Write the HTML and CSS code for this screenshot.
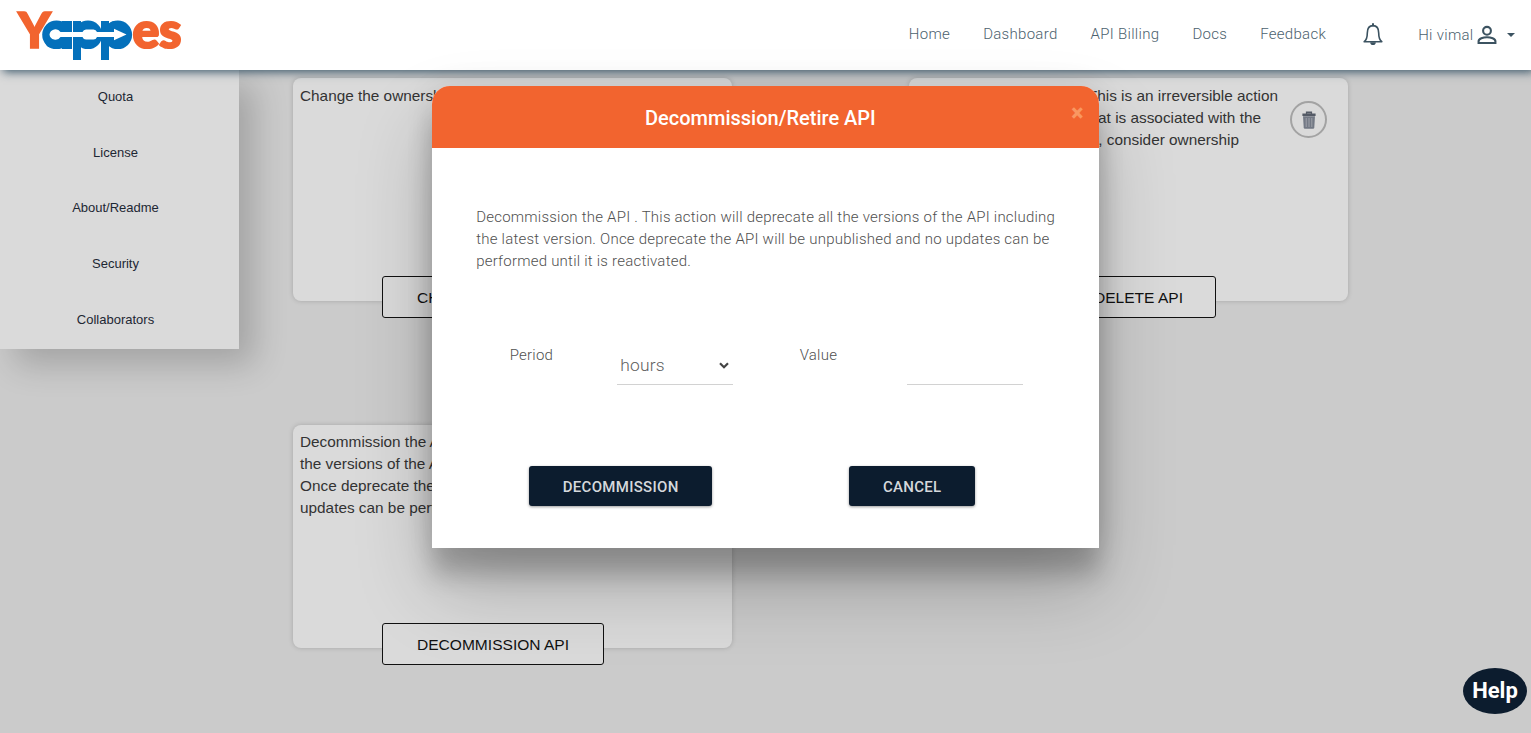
FILE: index.html
```html
<!DOCTYPE html>
<html lang="en">
<head>
<meta charset="utf-8">
<title>Yappes</title>
<link rel="stylesheet" href="styles.css">
</head>
<body>
<header class="topbar">
  <svg class="logo" width="190" height="70" viewBox="0 0 190 70" aria-label="Yappes">
    <text class="logo-orange" x="18" y="47.500" font-size="50" textLength="33" lengthAdjust="spacingAndGlyphs">Y</text>
    <text class="logo-blue" x="44 71 99" y="48" font-size="51">app</text>
    <g class="logo-blue-fill"><circle cx="56.500" cy="34.800" r="14.300"/><path d="M62 21h10v28H62zM73 21h8v39h-8zM101 21h8v39h-8z"/><circle cx="88" cy="34.800" r="14.300"/><circle cx="117.800" cy="34.800" r="14.300"/></g>
    <path d="M72.500 20v29" stroke="#fff" stroke-width=".8"/>
    <path class="logo-arrow" d="M49.500 34.500a6 6 0 0 1 11-2.500H82.500q1-2.600 3.500-2.600h7.500q2.500 0 3.500 2.600h17v-3.300l12.500 5.800-12.500 5.800v-3.300H97q-1 2.600-3.500 2.600H86q-2.500 0-3.500-2.600H60.500A6 6 0 0 1 49.500 34.500z"/>
    <text class="logo-orange bold" x="132.500" y="48" font-size="50" textLength="49" lengthAdjust="spacingAndGlyphs">es</text>
  </svg>
  <nav class="nav">
    <a>Home</a><a>Dashboard</a><a>API Billing</a><a>Docs</a><a>Feedback</a>
    <svg class="bell" width="24" height="26" viewBox="0 0 24 26"><path d="M3.200 20.700h17.600c-2.500-1.800-3.100-4.500-3.100-8.700 0-4.500-2-7.400-5.700-7.400s-5.700 2.900-5.700 7.400c0 4.200-.6 6.900-3.100 8.700z" fill="none" stroke="#3c5361" stroke-width="1.600" stroke-linejoin="round"/><path d="M12 4.600V3" stroke="#3c5361" stroke-width="2" stroke-linecap="round"/><path d="M9.200 21.200h5.600a2.800 2.800 0 0 1-5.600 0z" fill="#3c5361"/></svg>
    <span class="user">Hi vimal
      <svg width="20" height="20" viewBox="0 0 20 20" fill="none" stroke="#3c5361" stroke-width="2.100"><circle cx="10" cy="5.800" r="3.900"/><path d="M1.600 18v-1.800c0-2.600 4.600-4 8.400-4s8.400 1.400 8.400 4V18z"/></svg>
      <i class="caret"></i>
    </span>
  </nav>
</header>
<div class="page">
  <aside class="sidebar"><a>Quota</a><a>License</a><a>About/Readme</a><a>Security</a><a>Collaborators</a></aside>
  <main class="cards">
    <section class="card"><p>Change the ownership of the API</p><button class="outline">CHANGE OWNER</button></section>
    <section class="card">
      <p class="line-a">Delete API permanently. This is an irreversible action</p>
      <p class="line-b">and removes the data that is associated with the</p>
      <p class="line-c">API. Instead of deleting, consider ownership</p>
      <span class="trash"><svg width="18" height="20" viewBox="0 0 18 20"><path d="M3 4h12v1.500H3zM6.500 3.500V2h5v1.500" fill="#555b66" stroke="#555b66" stroke-width="1.200"/><path d="M3 6.300h12l-.7 11.200q-.1 1.300-1.300 1.300H5q-1.200 0-1.300-1.300z" fill="#737985"/><path d="M6.200 8v9M9 8v9M11.800 8v9" stroke="#a9acb2" stroke-width=".8"/></svg></span>
      <button class="outline delete">DELETE API</button>
    </section>
    <section class="card"><p>Decommission the API. This action will deprecate<br>the versions of the API including the latest one.<br>Once deprecate the API will be unpublished, no<br>updates can be performed until it is reactivated.</p><button class="outline">DECOMMISSION API</button></section>
  </main>
</div>
<div class="modal" role="dialog">
  <div class="modal-head"><h4>Decommission/Retire API</h4><span class="close">×</span></div>
  <div class="modal-body">
    <p class="message">Decommission the API . This action will deprecate all the versions of the API including<br>the latest version. Once deprecate the API will be unpublished and no updates can be<br>performed until it is reactivated.</p>
    <div class="form">
      <label>Period</label>
      <div class="field">hours<svg width="10" height="7" viewBox="0 0 10 7"><path d="M1 1.300l4 4 4-4" fill="none" stroke="#444" stroke-width="2.200"/></svg></div>
      <label>Value</label>
      <div class="field"></div>
    </div>
    <div class="actions"><button class="solid wide">DECOMMISSION</button><button class="solid">CANCEL</button></div>
  </div>
</div>
<div class="help">Help</div>
</body>
</html>
```
FILE: styles.css
```css
* { box-sizing: border-box; }
body { margin: 0; height: 733px; overflow: hidden; background: #cbcbcb; font-family: Roboto, sans-serif; font-weight: 300; }
button { font: inherit; margin: 0; }
.topbar { position: relative; z-index: 2; display: flex; justify-content: space-between; height: 70px; background: #fff; box-shadow: 3px 2px 9px rgba(35,68,89,.85); }
.logo { display: block; overflow: visible; }
.logo text { font-family: Lato, sans-serif; font-weight: 900; }
.logo-orange { fill: #f2642f; stroke: #f2642f; stroke-width: 1.600px; }
.logo-orange.bold { stroke-width: 2.200px; }
.logo-blue, .logo-blue-fill { fill: #0470bb; }
.logo-arrow { fill: #fff; }
.nav { display: flex; align-items: center; height: 67px; padding-right: 16px; color: #4b616e; font-size: 15px; letter-spacing: .3px; }
.nav a { margin-right: 33px; }
.bell { margin: 0 33px 0 2px; }
.user { display: flex; align-items: center; padding-top: 2px; }
.user svg { margin-left: 3px; }
.caret { margin-left: 10.500px; border: 4.500px solid transparent; border-top-color: #3c5361; border-bottom: 0; border-top-width: 4.500px; }
.page { display: flex; align-items: flex-start; height: 663px; }
.sidebar { width: 239px; height: 279px; padding-right: 8px; background: #dadada; box-shadow: 15px 15px 32px rgba(0,0,0,.2); font: 13px "Liberation Sans", sans-serif; color: #1d2733; text-align: center; }
.sidebar a { display: block; height: 55.700px; line-height: 54.500px; }
.cards { display: grid; grid-template-columns: 439px 439px; column-gap: 177px; row-gap: 123.500px; margin: 8px 0 0 54px; }
.card { position: relative; height: 223px; padding: 6.500px 7px; border-radius: 8px; background: #dadada; box-shadow: 0 0 5px rgba(0,0,0,.18); font: 15.350px/22px "Liberation Sans", sans-serif; color: #333; }
.card p { margin: 0; white-space: nowrap; }
.card .line-a { width: 362px; text-align: right; }
.card .line-b { width: 345px; text-align: right; }
.card .line-c { width: 323px; text-align: right; }
.outline { position: absolute; left: 89px; top: 198px; height: 42px; width: 222px; padding: 2px 0 0 34px; border: 1px solid #111; border-radius: 3px; background: #dadada; color: #111; font-size: 15.550px; text-align: left; }
.outline.delete { left: 150px; width: 157px; white-space: nowrap; }
.trash { position: absolute; right: 21px; top: 23px; display: grid; place-items: center; width: 37px; height: 37px; border: 2px solid #a3a3a3; border-radius: 50%; }
.modal { position: absolute; z-index: 3; left: 432.400px; top: 86px; width: 667px; height: 462px; border-radius: 18px 18px 0 0; background: #fff; box-shadow: 0 27px 24px 0 rgba(0,0,0,.2), 0 40px 77px 0 rgba(0,0,0,.22), 0 0 30px rgba(0,0,0,.08); }
.modal-head { display: flex; justify-content: center; position: relative; height: 62px; padding-right: 11px; border-radius: 18px 18px 0 0; background: #f2642f; color: #fff; }
.modal-head h4 { margin: 0; font-size: 20px; line-height: 65px; font-weight: 500; }
.close { position: absolute; right: 16px; top: 14px; font: 900 23px/27px Roboto, sans-serif; color: #f99761; }
.modal-body { padding: 58px 0 0 43.800px; color: #505050; }
.message { margin: 0; font-size: 15px; line-height: 22px; letter-spacing: .225px; white-space: nowrap; }
.form { display: grid; grid-template-columns: 107px 183px 107px 116px; padding: 72px 0 0 33.500px; font-size: 15px; letter-spacing: .23px; }
.form label { line-height: 22px; }
.field { display: flex; align-items: center; justify-content: space-between; width: 116px; height: 41px; padding: 2px 3.500px 0; border-bottom: 1px solid #d2d2d2; font-size: 17.400px; color: #606060; }
.actions { display: flex; gap: 137px; padding: 81px 0 0 53px; }
.solid { width: 126px; height: 40px; padding: 2px 0 0; border: 0; border-radius: 3px; background: #0c1c2e; color: #d5d8dc; font-size: 15px; font-weight: 500; letter-spacing: .3px; box-shadow: 0 1px 3px rgba(0,0,0,.4); }
.solid.wide { width: 183px; }
.help { position: absolute; right: 4px; bottom: 19px; width: 64px; height: 46px; border-radius: 50%; background: #0c1c2e; color: #fff; font-size: 22px; font-weight: 700; line-height: 46px; text-align: center; }
```
